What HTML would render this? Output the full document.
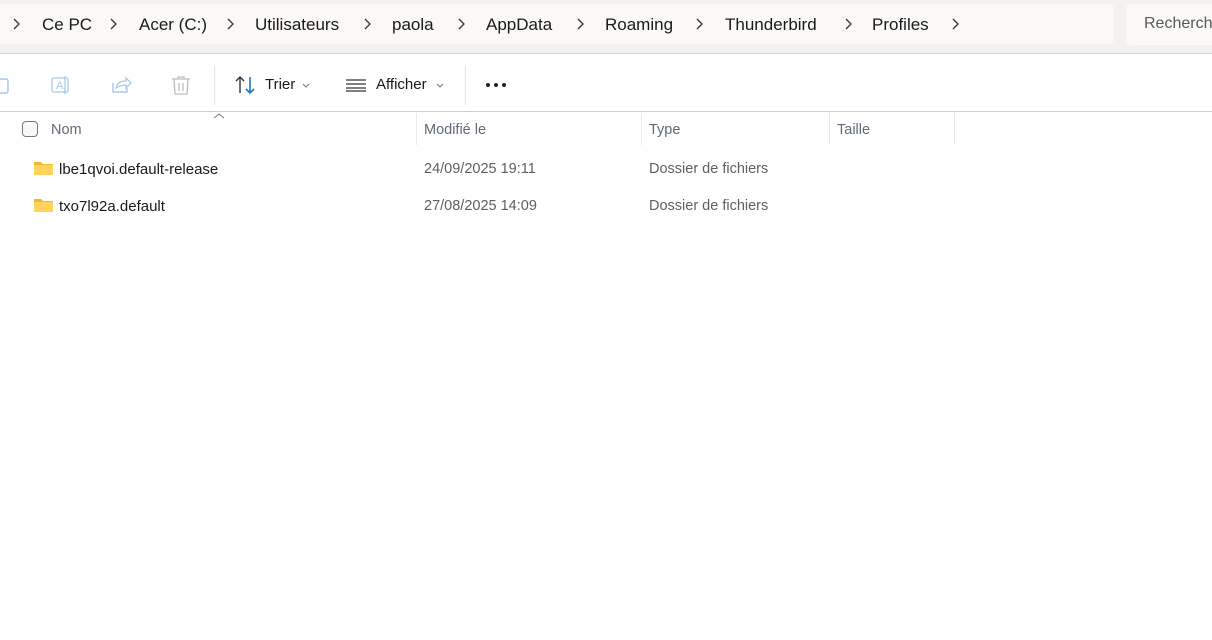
<!DOCTYPE html>
<html><head><meta charset="utf-8"><style>
*{margin:0;padding:0;box-sizing:border-box}
body{width:1212px;height:640px;overflow:hidden;background:#fff;font-family:"Segoe UI","Liberation Sans",sans-serif;color:#1a1a1a;position:relative}
.top{position:absolute;left:0;top:0;width:1212px;height:54px;background:#f3f2ee;border-bottom:1px solid #d6cfc2}
.addr{position:absolute;left:-10px;top:4px;width:1124px;height:40px;background:#faf9f7;border-radius:5px}
.search{position:absolute;left:1126px;top:4px;width:100px;height:41px;background:#faf9f7;border-radius:5px;font-size:16px;color:#5a5a5a;padding:11px 0 0 18px}
.crumb{position:absolute;top:15px;font-size:17px;color:#1a1a1a;white-space:nowrap}
.chev{position:absolute;top:18px}
.tb{position:absolute;top:55px;left:0;width:1212px;height:57px;border-bottom:1px solid #d6cfc2}
.sep{position:absolute;top:10px;width:1px;height:40px;background:#e5e5e5}
.t{position:absolute;font-size:15px;color:#1a1a1a}
.hdr{position:absolute;top:122px;font-size:14.5px;color:#5f6a78}
.colsep{position:absolute;top:113px;width:1px;height:32px;background:#e8e8e8}
.row{position:absolute;font-size:15px}
.gray{color:#5f5f5f}
.folder{position:absolute;width:19px;height:14px}
</style></head><body>
<div class="top">
 <div class="addr"></div>
 <div class="search">Recherch</div>
 <svg class="chev" style="left:12px" width="8" height="12"><path d="M2 1l5 5-5 5" fill="none" stroke="#333" stroke-width="1.3"/></svg>
 <span class="crumb" style="left:42px">Ce PC</span>
 <svg class="chev" style="left:109px" width="8" height="12"><path d="M2 1l5 5-5 5" fill="none" stroke="#333" stroke-width="1.3"/></svg>
 <span class="crumb" style="left:139px">Acer (C:)</span>
 <svg class="chev" style="left:226px" width="8" height="12"><path d="M2 1l5 5-5 5" fill="none" stroke="#333" stroke-width="1.3"/></svg>
 <span class="crumb" style="left:255px">Utilisateurs</span>
 <svg class="chev" style="left:363px" width="8" height="12"><path d="M2 1l5 5-5 5" fill="none" stroke="#333" stroke-width="1.3"/></svg>
 <span class="crumb" style="left:392px">paola</span>
 <svg class="chev" style="left:457px" width="8" height="12"><path d="M2 1l5 5-5 5" fill="none" stroke="#333" stroke-width="1.3"/></svg>
 <span class="crumb" style="left:486px">AppData</span>
 <svg class="chev" style="left:576px" width="8" height="12"><path d="M2 1l5 5-5 5" fill="none" stroke="#333" stroke-width="1.3"/></svg>
 <span class="crumb" style="left:605px">Roaming</span>
 <svg class="chev" style="left:695px" width="8" height="12"><path d="M2 1l5 5-5 5" fill="none" stroke="#333" stroke-width="1.3"/></svg>
 <span class="crumb" style="left:725px">Thunderbird</span>
 <svg class="chev" style="left:844px" width="8" height="12"><path d="M2 1l5 5-5 5" fill="none" stroke="#333" stroke-width="1.3"/></svg>
 <span class="crumb" style="left:872px">Profiles</span>
 <svg class="chev" style="left:951px" width="8" height="12"><path d="M2 1l5 5-5 5" fill="none" stroke="#333" stroke-width="1.3"/></svg>
</div>
<div class="tb">
 <svg style="position:absolute;left:-4px;top:20px" width="16" height="22"><rect x="2" y="4" width="10" height="14" rx="2" fill="none" stroke="#a9c8ea" stroke-width="1.5"/></svg>
 <svg style="position:absolute;left:50px;top:19px" width="22" height="22"><rect x="2" y="4" width="16" height="14" rx="2" fill="none" stroke="#a9c8ea" stroke-width="1.3"/><text x="6" y="15" font-size="11" fill="#a9c8ea" font-family="Liberation Sans">A</text><line x1="15" y1="2" x2="15" y2="20" stroke="#a9c8ea" stroke-width="1.3"/></svg>
 <svg style="position:absolute;left:110px;top:19px" width="22" height="22"><path d="M3 9v9h14v-4" fill="none" stroke="#a9c8ea" stroke-width="1.4"/><path d="M6 14c1-5 5-7 10-7V4l5 5-5 5v-3c-4 0-7 1-10 3z" fill="none" stroke="#a9c8ea" stroke-width="1.3"/></svg>
 <svg style="position:absolute;left:170px;top:19px" width="22" height="22"><path d="M2 5h18M8 5V3h6v2M4 5l1 15h12l1-15M9 9v8M13 9v8" fill="none" stroke="#bdbdbd" stroke-width="1.3"/></svg>
 <div class="sep" style="left:214px"></div>
 <svg style="position:absolute;left:234px;top:20px" width="24" height="20"><path d="M6 18V2M2 6l4-4 4 4" fill="none" stroke="#333" stroke-width="1.4"/><path d="M16 2v16M12 14l4 4 4-4" fill="none" stroke="#1976d2" stroke-width="1.6"/></svg>
 <span class="t" style="left:265px;top:21px">Trier</span>
 <svg style="position:absolute;left:302px;top:28px" width="8" height="5"><path d="M1 1l3 3 3-3" fill="none" stroke="#777" stroke-width="1"/></svg>
 <svg style="position:absolute;left:345px;top:23px" width="22" height="14"><path d="M1 2h20M1 6h20M1 10h20M1 13h20" stroke="#333" stroke-width="1.2"/></svg>
 <span class="t" style="left:376px;top:21px">Afficher</span>
 <svg style="position:absolute;left:436px;top:28px" width="8" height="5"><path d="M1 1l3 3 3-3" fill="none" stroke="#777" stroke-width="1"/></svg>
 <div class="sep" style="left:465px"></div>
 <svg style="position:absolute;left:485px;top:27px" width="24" height="6"><circle cx="3" cy="3" r="2" fill="#222"/><circle cx="11" cy="3" r="2" fill="#222"/><circle cx="19" cy="3" r="2" fill="#222"/></svg>
</div>
<svg style="position:absolute;left:213px;top:112px" width="12" height="8"><path d="M1 6l5-4 5 4" fill="none" stroke="#777" stroke-width="1"/></svg>
<div style="position:absolute;left:22px;top:121px;width:16px;height:16px;border:1.3px solid #777;border-radius:4px;background:#f8f8f8"></div>
<span class="hdr" style="left:51px">Nom</span>
<div class="colsep" style="left:416px"></div>
<span class="hdr" style="left:424px">Modifié le</span>
<div class="colsep" style="left:641px"></div>
<span class="hdr" style="left:649px">Type</span>
<div class="colsep" style="left:829px"></div>
<span class="hdr" style="left:837px">Taille</span>
<div class="colsep" style="left:954px"></div>

<svg class="folder" style="left:34px;top:161px" viewBox="0 0 19 14"><path d="M0 1h7l2 2h10v11H0z" fill="#f2b632"/><rect x="0" y="4" width="19" height="10" fill="#ffd35c"/></svg>
<span class="row" style="left:59px;top:161px">lbe1qvoi.default-release</span>
<span class="row gray" style="left:424px;top:161px;font-size:14.5px">24/09/2025 19:11</span>
<span class="row gray" style="left:649px;top:161px;font-size:14.5px">Dossier de fichiers</span>

<svg class="folder" style="left:34px;top:198px" viewBox="0 0 19 14"><path d="M0 1h7l2 2h10v11H0z" fill="#f2b632"/><rect x="0" y="4" width="19" height="10" fill="#ffd35c"/></svg>
<span class="row" style="left:59px;top:198px">txo7l92a.default</span>
<span class="row gray" style="left:424px;top:198px;font-size:14.5px">27/08/2025 14:09</span>
<span class="row gray" style="left:649px;top:198px;font-size:14.5px">Dossier de fichiers</span>
</body></html>
